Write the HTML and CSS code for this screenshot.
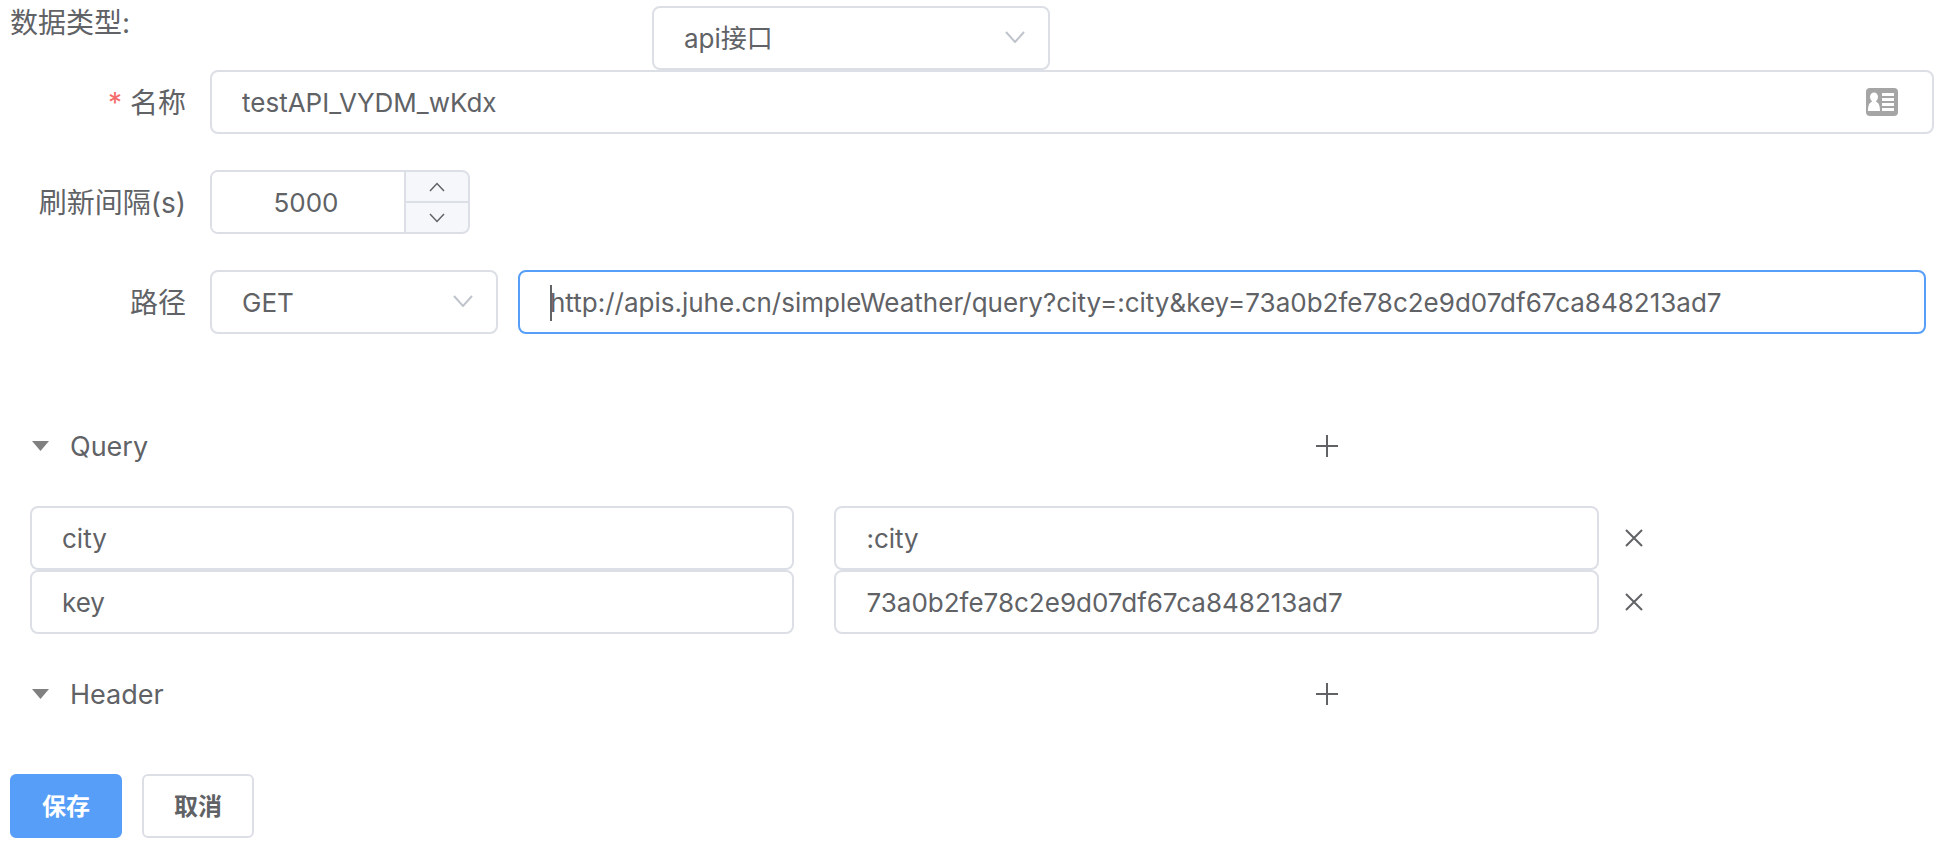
FILE: index.html
```html
<!DOCTYPE html>
<html lang="zh-CN">
<head>
<meta charset="utf-8">
<meta name="viewport" content="width=device-width, initial-scale=1">
<title>数据类型</title>
<link rel="stylesheet" href="styles.css">
</head>
<body>
<form class="editor">
  <div class="type-row">
    <label class="type-label" for="type">数据类型:</label>
    <div class="select select-type">
      <select class="control" id="type"><option>api接口</option></select>
      <svg class="chevron" viewBox="0 0 20 12"><path d="M1 1l9 10 9-10"/></svg>
    </div>
  </div>

  <div class="field">
    <label class="field-label" for="name"><span class="required">*</span>名称</label>
    <div class="input-wrap">
      <input class="control" id="name" type="text" value="testAPI_VYDM_wKdx">
      <svg class="contact" viewBox="0 0 32 28">
        <rect width="32" height="28" rx="4" fill="#a5a5a5"/>
        <g fill="#fff">
          <ellipse cx="8" cy="9" rx="4" ry="4.500"/>
          <path d="M2 23c0-5 1-8 4-9.500V12h4v1.500c3 1.500 4 4.500 4 9.500z"/>
          <path d="M16 5h12v3H16zM16 10h12v3H16zM16 15h12v3H16zM16 20h12v3H16z"/>
        </g>
      </svg>
    </div>
  </div>

  <div class="field">
    <label class="field-label" for="interval">刷新间隔(s)</label>
    <div class="number">
      <input class="number-input" id="interval" type="text" inputmode="numeric" value="5000">
      <div class="steps">
        <button class="step" type="button" aria-label="增加"><svg viewBox="0 0 16 10"><path d="M1 9l7-7.500L15 9"/></svg></button>
        <button class="step" type="button" aria-label="减少"><svg viewBox="0 0 16 10"><path d="M1 1l7 7.500L15 1"/></svg></button>
      </div>
    </div>
  </div>

  <div class="field">
    <label class="field-label" for="url">路径</label>
    <div class="path">
      <div class="select select-method">
        <select class="control" aria-label="请求方法"><option>GET</option></select>
        <svg class="chevron" viewBox="0 0 20 12"><path d="M1 1l9 10 9-10"/></svg>
      </div>
      <div class="input-wrap">
        <input class="control control-active" id="url" type="text" value="http://apis.juhe.cn/simpleWeather/query?city=:city&amp;key=73a0b2fe78c2e9d07df67ca848213ad7">
        <span class="caret"></span>
      </div>
    </div>
  </div>

  <section class="params params-query">
    <div class="params-head">
      <button class="toggle" type="button"><svg class="triangle" viewBox="0 0 17 10"><path d="M0 0h17L8.500 10z"/></svg>Query</button>
      <button class="icon-button" type="button" aria-label="添加 Query"><svg class="plus" viewBox="0 0 24 24"><path d="M12 1v22M1 12h22"/></svg></button>
    </div>
    <div class="param">
      <div class="pair">
        <input class="control" type="text" aria-label="参数名" value="city">
        <input class="control" type="text" aria-label="参数值" value=":city">
      </div>
      <button class="icon-button" type="button" aria-label="删除 city"><svg class="cross" viewBox="0 0 18 18"><path d="M1 1l16 16M17 1L1 17"/></svg></button>
    </div>
    <div class="param">
      <div class="pair">
        <input class="control" type="text" aria-label="参数名" value="key">
        <input class="control" type="text" aria-label="参数值" value="73a0b2fe78c2e9d07df67ca848213ad7">
      </div>
      <button class="icon-button" type="button" aria-label="删除 key"><svg class="cross" viewBox="0 0 18 18"><path d="M1 1l16 16M17 1L1 17"/></svg></button>
    </div>
  </section>

  <section class="params">
    <div class="params-head">
      <button class="toggle" type="button"><svg class="triangle" viewBox="0 0 17 10"><path d="M0 0h17L8.500 10z"/></svg>Header</button>
      <button class="icon-button" type="button" aria-label="添加 Header"><svg class="plus" viewBox="0 0 24 24"><path d="M12 1v22M1 12h22"/></svg></button>
    </div>
  </section>

  <div class="actions">
    <button class="button button-primary" type="submit">保存</button>
    <button class="button" type="button">取消</button>
  </div>
</form>
</body>
</html>
```
FILE: styles.css
```css
* {
  box-sizing: border-box;
}

body {
  margin: 0;
  background: #fff;
  color: #606266;
  font-family: Inter, "Noto Sans CJK SC", sans-serif;
  font-size: 28px;
}

button,
input,
select {
  margin: 0;
  color: inherit;
  font-family: inherit;
}

button {
  padding: 0;
  border: 0;
  background: none;
  cursor: pointer;
}

svg {
  display: block;
  fill: none;
}

.editor {
  padding: 0 4px 14px 10px;
}

.type-row {
  display: grid;
  grid-template-columns: 1fr 2fr;
  margin-right: -2px;
  padding-top: 6px;
}

.type-label {
  line-height: 34px;
}

.control {
  display: block;
  width: 100%;
  height: 64px;
  padding: 0 30px;
  border: 2px solid #dcdfe6;
  border-radius: 8px;
  outline: 0;
  background: #fff;
  font-size: 26px;
  appearance: none;
}

.control-active {
  border-color: #579ef8;
}

.select,
.input-wrap {
  position: relative;
}

.input-wrap {
  flex: 1;
  min-width: 0;
}

.select-type {
  width: 398px;
}

.select-method {
  width: 288px;
}

.chevron {
  position: absolute;
  top: 25px;
  right: 25px;
  width: 20px;
  height: 12px;
  stroke: #c0c4cc;
  stroke-width: 2;
  pointer-events: none;
}

.contact {
  position: absolute;
  top: 18px;
  right: 36px;
  width: 32px;
  height: 28px;
}

.caret {
  position: absolute;
  top: 15px;
  left: 32px;
  width: 2px;
  height: 36px;
  background: #606266;
}

.field {
  display: flex;
  align-items: flex-start;
  margin-bottom: 34px;
}

.field-label {
  flex: none;
  width: 200px;
  padding-right: 24px;
  line-height: 66px;
  text-align: right;
}

.required {
  margin-right: 8px;
  color: #f56c6c;
}

.number {
  display: flex;
  width: 260px;
  height: 64px;
  overflow: hidden;
  border: 2px solid #dcdfe6;
  border-radius: 8px;
}

.number-input {
  flex: 1;
  min-width: 0;
  padding: 0 10px 0 6px;
  border: 0;
  outline: 0;
  font-size: 26px;
  text-align: center;
}

.steps {
  display: grid;
  grid-template-rows: 1fr 1fr;
  gap: 2px;
  width: 64px;
  border-left: 2px solid #dcdfe6;
  background: #dcdfe6;
}

.step {
  display: grid;
  place-items: center;
  background: #f5f7fa;
}

.step svg {
  width: 16px;
  height: 10px;
  stroke: #606266;
  stroke-width: 1.5;
}

.path {
  display: flex;
  flex: 1;
  gap: 20px;
  padding-right: 8px;
}

.params {
  padding-left: 20px;
}

.params-query {
  margin: 78px 0 28px;
}

.params-head {
  display: grid;
  grid-template-columns: 2fr 1fr;
  align-items: center;
  height: 64px;
  padding-left: 41px;
}

.params-query .params-head {
  margin-bottom: 28px;
}

.toggle {
  display: flex;
  gap: 21px;
  align-items: center;
  margin-left: -39px;
  font-size: 27px;
}

.triangle {
  width: 17px;
  height: 10px;
  fill: #808080;
}

.icon-button {
  justify-self: start;
}

.plus {
  width: 24px;
  height: 24px;
  margin: 0 2px;
  stroke: #606266;
  stroke-width: 2;
}

.param {
  display: grid;
  grid-template-columns: 82.4% 1fr;
  column-gap: 26px;
  align-items: center;
}

.pair {
  display: grid;
  grid-template-columns: 1fr 1fr;
  gap: 40px;
}

.cross {
  width: 18px;
  height: 18px;
  stroke: #606266;
  stroke-width: 2;
}

.actions {
  display: flex;
  gap: 20px;
  margin-top: 48px;
}

.button {
  height: 64px;
  padding: 0 30px 4px;
  border: 2px solid #dcdfe6;
  border-radius: 6px;
  background: #fff;
  font-family: "Noto Sans CJK SC", sans-serif;
  font-size: 24px;
  font-weight: 600;
}

.button-primary {
  border-color: #579ef8;
  background: #579ef8;
  color: #fff;
}
```
